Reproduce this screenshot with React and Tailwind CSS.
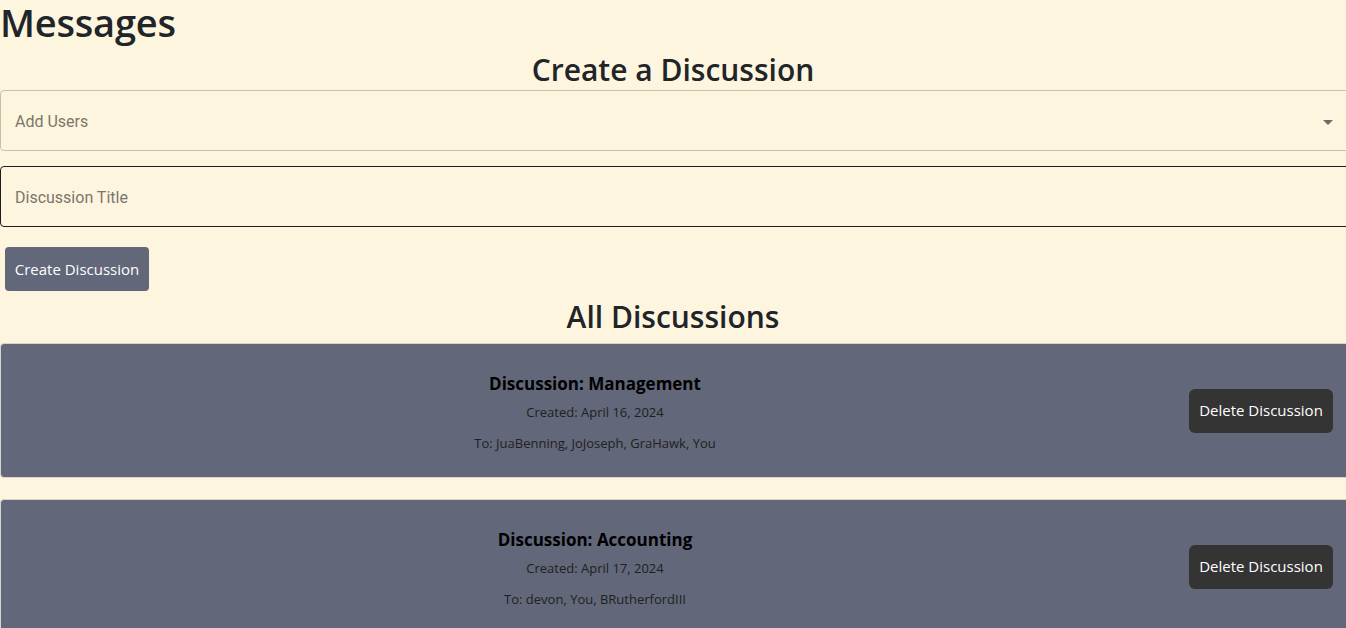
import React from "react";

const discussions = [
  { title: "Management", created: "April 16, 2024", to: "JuaBenning, JoJoseph, GraHawk, You" },
  { title: "Accounting", created: "April 17, 2024", to: "devon, You, BRutherfordIII" },
];

const DiscussionCard = ({ d }) => (
  <div className="mb-[21px] flex h-[135px] items-center rounded border border-[#d8d4cc] bg-[#626779]">
    <div className="flex flex-1 flex-col items-center pt-[3px] text-center">
      <h5 className="text-[17px] font-bold leading-[22px] text-black">Discussion: {d.title}</h5>
      <p className="mt-[8px] text-[13px] leading-[18px] text-[#1f1f1f]">Created: {d.created}</p>
      <p className="mt-[13px] text-[13px] leading-[18px] text-[#1f1f1f]">To: {d.to}</p>
    </div>
    <button className="h-[44px] w-[144px] rounded-md bg-[#343434] text-[15px] text-white">Delete Discussion</button>
    <div className="w-[26px]" />
  </div>
);

export default function App() {
  return (
    <div className="min-h-screen w-full overflow-hidden bg-[#fef5df] font-['Open_Sans','Noto_Sans',sans-serif] text-[#212529]">
      <div className="w-[1360px]">
        <h1 className="text-[38px] font-semibold leading-[44px] tracking-[-0.2px]">Messages</h1>
        <h2 className="mt-[6px] w-[1346px] text-center text-[30px] font-semibold leading-[40px]">Create a Discussion</h2>
        <div className="flex h-[61px] items-center justify-between rounded border border-[#c8c0ad] pl-[14px] pr-[30px] pt-[3px] font-['Roboto',sans-serif] text-[16px] text-[#7b766b]">
          <span>Add Users</span>
          <svg width="10" height="5" viewBox="0 0 10 5" className="mr-[-4px]">
            <path d="M0 0 L10 0 L5 5 Z" fill="#6b6b6b" />
          </svg>
        </div>
        <div className="mt-[15px] flex h-[61px] items-center rounded border border-[#1c1c1c] pl-[14px] pt-[3px] font-['Roboto',sans-serif] text-[16px] text-[#7b766b]">
          Discussion Title
        </div>
        <button className="ml-[5px] mt-[20px] h-[44px] w-[144px] rounded bg-[#626779] text-[15px] text-white">Create Discussion</button>
        <h2 className="mt-[6px] w-[1346px] text-center text-[30px] font-semibold leading-[40px]">All Discussions</h2>
        <div className="mt-[6px]">
          {discussions.map((d) => (
            <DiscussionCard key={d.title} d={d} />
          ))}
        </div>
      </div>
    </div>
  );
}
